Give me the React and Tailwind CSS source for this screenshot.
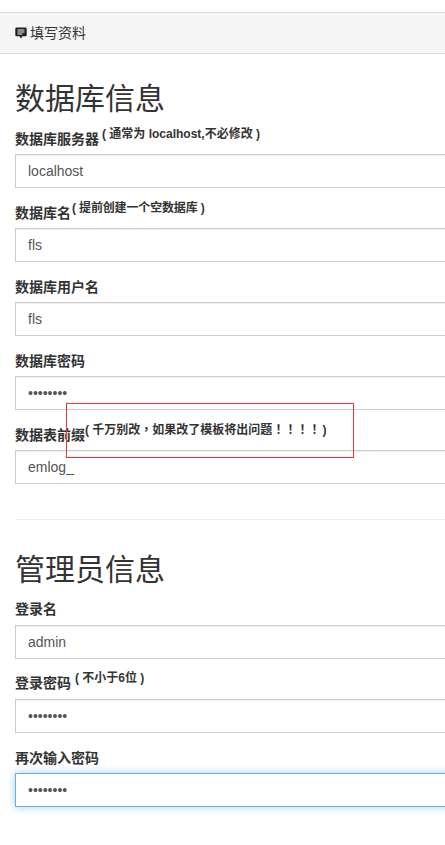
const FONT = "font-['Liberation_Sans','Noto_Sans_CJK_SC',sans-serif]";
const TC = "font-['Noto_Sans_CJK_TC',sans-serif]";

function Field({ label, hint, hintClass = "ml-[1px]", labelClass = "mb-[5px]", value, type = "text", focus = false, last = false }) {
  return (
    <div className={last ? "" : "mb-[15px]"}>
      <label className={`block h-5 text-[14px] font-bold leading-5 text-[#333] ${labelClass}`}>
        {label}
        {hint && <sup className={`text-[12px] font-bold leading-none text-[#333] [vertical-align:0px] ${hintClass}`}>{hint}</sup>}
      </label>
      <input
        readOnly
        type={type}
        value={value}
        className={`block h-[34px] w-full border bg-white px-3 text-[14px] text-[#555] outline-none ${
          focus
            ? "border-[#66afe9] shadow-[0_0_8px_rgba(102,175,233,0.6)]"
            : "border-[#ccc] shadow-[inset_0_1px_1px_rgba(0,0,0,0.075)]"
        }`}
      />
    </div>
  );
}

export default function App() {
  return (
    <div className={`relative h-[845px] w-[445px] overflow-hidden bg-white ${FONT}`}>
      <div className="w-[800px] pt-3">
        <div className="flex h-[42px] items-center gap-[3px] border-y border-[#ddd] bg-[#f5f5f5] pl-[15px] text-[14px] text-[#333]">
          <svg width="12" height="13" viewBox="0 0 12 13" className="mt-[1px]">
            <path d="M1.500.5h9a1.200 1.200 0 0 1 1.200 1.200v6.400a1.200 1.200 0 0 1-1.200 1.200H7.500L6 11.500 4.500 9.300H1.500A1.200 1.200 0 0 1 .300 8.100V1.700A1.200 1.200 0 0 1 1.500.5Z" fill="#222" />
            <path d="M2.500 3h7M2.500 5h7M2.500 7h5" stroke="#f5f5f5" strokeWidth="1" />
          </svg>
          <span>填写资料</span>
        </div>
        <div className="px-[15px]">
          <h1 className="mt-[25px] mb-[10px] h-[40px] text-[30px] font-normal leading-[40px] text-[#333]">数据库信息</h1>
          <Field label="数据库服务器" hint="( 通常为 localhost,不必修改 )" hintClass="ml-[3px]" value="localhost" />
          <Field label="数据库名" hint="( 提前创建一个空数据库 )" hintClass="ml-[1px] tracking-[-0.15px]" value="fls" />
          <Field label="数据库用户名" value="fls" />
          <Field label="数据库密码" type="password" value="password" />
          <Field
            label="数据表前缀"
            hint={<>( 千万别改<span className={TC}>，</span>如果改了模板将出问题<span className={TC}>！！！！</span><span className="ml-[2px]">)</span></>}
            hintClass="ml-0"
            value="emlog_"
          />
          <hr className="mt-[35px] mb-[30px] border-t border-[#eee]" />
          <h1 className="mb-[10px] h-[40px] text-[30px] font-normal leading-[40px] text-[#333]">管理员信息</h1>
          <Field label="登录名" labelClass="-mt-px mb-[6px]" value="admin" />
          <Field label="登录密码" hint="( 不小于6位 )" hintClass="ml-[4px]" labelClass="-mt-px mb-[6px]" type="password" value="password" />
          <Field label="再次输入密码" type="password" value="password" focus last />
        </div>
      </div>
      <div className="absolute left-[66px] top-[403px] h-[55px] w-[288px] border border-[#e33]" />
    </div>
  );
}
